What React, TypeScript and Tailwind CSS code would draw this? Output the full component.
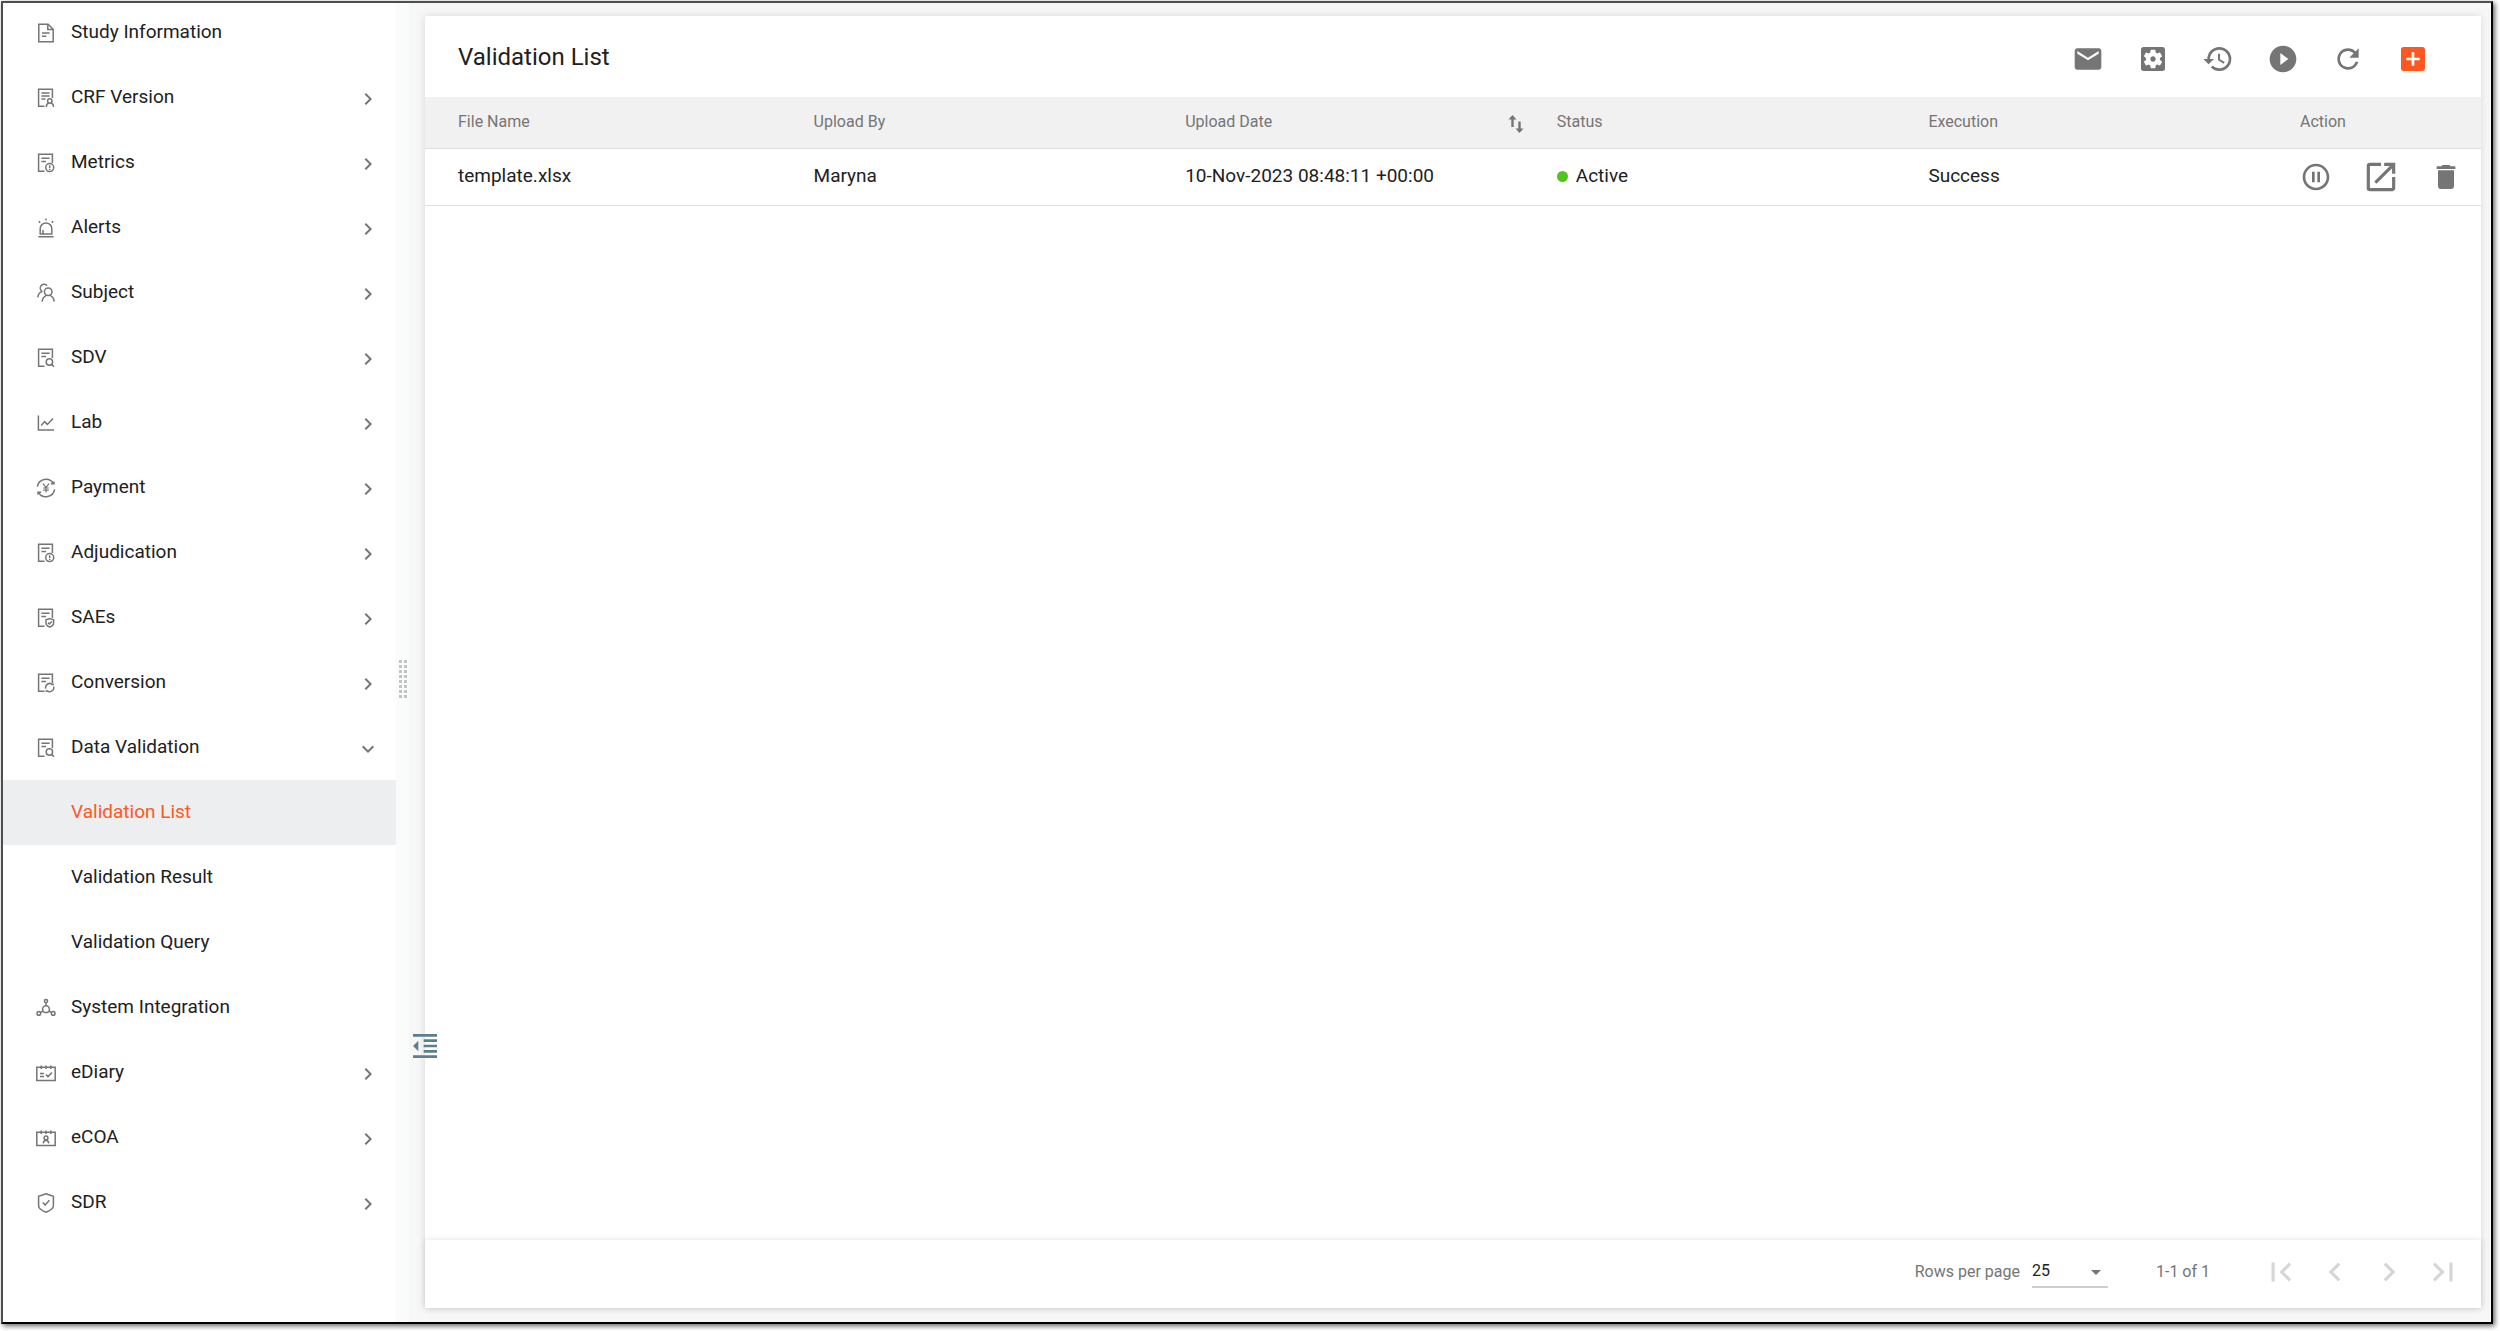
import type { ReactNode } from "react";
import {
  MdAddBox,
  MdArrowDropDown,
  MdChevronLeft,
  MdChevronRight,
  MdDelete,
  MdExpandMore,
  MdFirstPage,
  MdFormatIndentDecrease,
  MdHistory,
  MdLastPage,
  MdMail,
  MdOpenInNew,
  MdPauseCircleOutline,
  MdPlayCircleFilled,
  MdRefresh,
  MdSettingsApplications,
} from "react-icons/md";

function MenuIcon({ children }: { children: ReactNode }) {
  return (
    <svg
      className="h-5 w-5 shrink-0 text-[#757575]"
      viewBox="0 0 20 20"
      fill="none"
      stroke="currentColor"
      strokeWidth="1.5"
      aria-hidden="true"
    >
      {children}
    </svg>
  );
}

// Sheet with the lower right corner left open for a small mark
function SheetIcon({ children }: { children: ReactNode }) {
  return (
    <MenuIcon>
      <path d="M8.5 18.3H2.6V1.2H16.4V10" />
      <path d="M5.4 5.2H13.6M5.4 8.6H10" />
      {children}
    </MenuIcon>
  );
}

const icons = {
  study: (
    <MenuIcon>
      <path d="M2.8 1.2H12.2L17.2 6.2V18.8H2.8Z" />
      <path d="M11.8 1.4V6.6H17M6 10H13.6M6 13.2H10.4" />
    </MenuIcon>
  ),
  crf: (
    <MenuIcon>
      <path d="M8.5 18.3H2.6V1.2H16.4V10" />
      <path d="M5.4 5H13.6M5.4 8H13.6M5.4 11H9.5" />
      <circle cx="13.8" cy="13" r="2.2" />
      <path d="M10.4 19V18A2.8 2.8 0 0 1 12.6 15.3M17.4 19V18A2.8 2.8 0 0 0 15.2 15.3" />
    </MenuIcon>
  ),
  info: (
    <SheetIcon>
      <circle cx="13.7" cy="14.6" r="4" />
      <path d="M13.7 12.3V15.2M13.7 15.9V17" />
    </SheetIcon>
  ),
  search: (
    <SheetIcon>
      <circle cx="13.4" cy="14" r="3.2" />
      <path d="M15.6 16.4L18 18.8" />
    </SheetIcon>
  ),
  shield: (
    <SheetIcon>
      <path d="M13.8 10.6L17.6 11.9V15C17.6 17 15.6 18.4 13.8 19C12 18.4 10 17 10 15V11.9Z" />
      <path d="M12 14.6L13.4 16L15.8 13.4" />
    </SheetIcon>
  ),
  convert: (
    <SheetIcon>
      <path d="M9.8 15.6A4 4 0 0 1 16.6 11.8M17.6 13.6A4 4 0 0 1 10.8 17.4M17.4 10.6L16.8 12.2M10 18.8L10.6 17.2" />
    </SheetIcon>
  ),
  alerts: (
    <MenuIcon>
      <path d="M4.2 16V10.4A5.8 5.4 0 0 1 15.8 10.4V16ZM2.4 18.8H17.6M7 15.6V12" />
      <path d="M10 0.6V2.6M2.8 3.2L4.2 4.6M17.2 3.2L15.8 4.6" />
    </MenuIcon>
  ),
  subject: (
    <MenuIcon>
      <circle cx="12.2" cy="8.8" r="3.8" />
      <path d="M6.2 18.6C6.4 15.4 8.2 13.4 10.4 12.4M18.2 18.6C18 15.4 16.2 13.4 14 12.4" />
      <path d="M11 2.8A3.6 3.6 0 0 0 5 7.4L5.8 8.6C3.4 9.6 2 11.6 1.8 14.4" />
    </MenuIcon>
  ),
  lab: (
    <MenuIcon>
      <path d="M2.4 2.6V17H18M5.2 12.4L8.6 8.6L11.4 11.4L17 5.6" />
    </MenuIcon>
  ),
  payment: (
    <MenuIcon>
      <path d="M1.4 8.6A8.7 8.7 0 0 1 17.4 5.4M18.6 11.4A8.7 8.7 0 0 1 2.6 14.6" />
      <path d="M14.8 5.8H18V3.4M5.2 14.2H2V16.6" />
      <path d="M7 5.6L10 9.6L13 5.6M10 9.6V14.6M7.2 10H12.8M7.2 12.2H12.8" strokeWidth="1.2" />
    </MenuIcon>
  ),
  system: (
    <MenuIcon>
      <circle cx="10" cy="11.2" r="3.4" />
      <circle cx="10" cy="3" r="1.6" />
      <circle cx="2.8" cy="15.4" r="1.8" />
      <circle cx="17.2" cy="15.4" r="1.8" />
      <path d="M10 4.8V7.6M4.4 14.6L7 13M15.6 14.6L13 13" />
    </MenuIcon>
  ),
  diary: (
    <MenuIcon>
      <path d="M0.8 4.2H19.2V17.4H0.8ZM5.2 2.4V6M10 2.4V6M14.8 2.4V6" />
      <path d="M4 10.6H8M4 13.6H8M10 11.4L12 13.6L16 9.4" />
    </MenuIcon>
  ),
  coa: (
    <MenuIcon>
      <path d="M0.8 4.2H19.2V17.4H0.8ZM5.2 2.4V6M10 2.4V6M14.8 2.4V6" />
      <circle cx="10" cy="10" r="1.9" />
      <path d="M7.2 15.4C7.4 13.4 8.2 12.4 10 12.2C11.8 12.4 12.6 13.4 12.8 15.4" />
    </MenuIcon>
  ),
  sdr: (
    <MenuIcon>
      <path d="M10 0.8L17.4 3.2V12.4C17.4 15.4 13 18 10 19.2C7 18 2.6 15.4 2.6 12.4V3.2Z" />
      <path d="M6.8 9.6L9.2 12L13.4 7.2" />
    </MenuIcon>
  ),
};

type MenuItem = {
  label: string;
  icon: ReactNode;
  arrow?: boolean;
  children?: string[];
};

const menu: MenuItem[] = [
  { label: "Study Information", icon: icons.study },
  { label: "CRF Version", icon: icons.crf, arrow: true },
  { label: "Metrics", icon: icons.info, arrow: true },
  { label: "Alerts", icon: icons.alerts, arrow: true },
  { label: "Subject", icon: icons.subject, arrow: true },
  { label: "SDV", icon: icons.search, arrow: true },
  { label: "Lab", icon: icons.lab, arrow: true },
  { label: "Payment", icon: icons.payment, arrow: true },
  { label: "Adjudication", icon: icons.info, arrow: true },
  { label: "SAEs", icon: icons.shield, arrow: true },
  { label: "Conversion", icon: icons.convert, arrow: true },
  {
    label: "Data Validation",
    icon: icons.search,
    arrow: true,
    children: ["Validation List", "Validation Result", "Validation Query"],
  },
  { label: "System Integration", icon: icons.system },
  { label: "eDiary", icon: icons.diary, arrow: true },
  { label: "eCOA", icon: icons.coa, arrow: true },
  { label: "SDR", icon: icons.sdr, arrow: true },
];

function Sidebar() {
  const active = "Validation List";

  return (
    <nav className="-mt-[3px] w-[393px] shrink-0 bg-white text-[19px] leading-6">
      <ul>
        {menu.map((item) => (
          <li key={item.label}>
            <button type="button" className="flex h-[65px] w-full items-center gap-[15px] pl-[33px] pr-4 text-left">
              {item.icon}
              <span className="flex-1 pb-[2px]">{item.label}</span>
              {item.arrow &&
                (item.children ? (
                  <MdExpandMore className="mt-[2px] h-6 w-6 text-[#757575]" />
                ) : (
                  <MdChevronRight className="mt-[2px] h-6 w-6 text-[#757575]" />
                ))}
            </button>
            {item.children && (
              <ul>
                {item.children.map((child) => (
                  <li key={child}>
                    <a
                      href="#"
                      className={
                        child === active
                          ? "flex h-[65px] items-center bg-[#edeef0] pb-[2px] pl-[68px] text-[#ff5722]"
                          : "flex h-[65px] items-center pb-[2px] pl-[68px]"
                      }
                    >
                      {child}
                    </a>
                  </li>
                ))}
              </ul>
            )}
          </li>
        ))}
      </ul>
    </nav>
  );
}

const tools = [
  { label: "Mail", icon: <MdMail className="h-8 w-8" /> },
  { label: "Settings", icon: <MdSettingsApplications className="h-8 w-8" /> },
  { label: "History", icon: <MdHistory className="h-8 w-8" /> },
  { label: "Run", icon: <MdPlayCircleFilled className="h-8 w-8" /> },
  { label: "Refresh", icon: <MdRefresh className="h-8 w-8" /> },
  { label: "Add", icon: <MdAddBox className="h-8 w-8 text-[#ff5722]" /> },
];

const rowActions = [
  { label: "Pause", icon: <MdPauseCircleOutline className="h-8 w-8" /> },
  { label: "Open", icon: <MdOpenInNew className="h-[38px] w-[38px]" /> },
  { label: "Delete", icon: <MdDelete className="h-8 w-8" /> },
];

const pager = [
  { label: "First page", icon: <MdFirstPage className="h-[38px] w-[38px]" /> },
  { label: "Previous page", icon: <MdChevronLeft className="h-[38px] w-[38px]" /> },
  { label: "Next page", icon: <MdChevronRight className="h-[38px] w-[38px]" /> },
  { label: "Last page", icon: <MdLastPage className="h-[38px] w-[38px]" /> },
];

const rows = [
  {
    file: "template.xlsx",
    user: "Maryna",
    date: "10-Nov-2023 08:48:11 +00:00",
    status: "Active",
    execution: "Success",
  },
];

function SortIcon() {
  return (
    <svg className="mt-1 h-5 w-4 text-[#757575]" viewBox="0 0 16 20" fill="currentColor" aria-hidden="true">
      <path d="M4.5 1L8.5 5.5H5.7V13H3.3V5.5H0.5ZM11.5 19L7.5 14.5H10.3V7.5H12.7V14.5H15.5Z" />
    </svg>
  );
}

function ValidationTable() {
  return (
    <table className="w-full table-fixed text-left">
      <thead className="bg-[#f1f1f1] text-base text-[#757575]">
        <tr className="h-[51px] border-b border-[#e0e0e0]">
          <th className="pl-[33px] font-normal">File Name</th>
          <th className="pl-[17px] font-normal">Upload By</th>
          <th className="pl-[17px] pr-4 font-normal">
            <button type="button" className="flex w-full items-center justify-between">
              Upload Date
              <SortIcon />
            </button>
          </th>
          <th className="pl-[17px] font-normal">Status</th>
          <th className="pl-[17px] font-normal">Execution</th>
          <th className="w-[198px] pl-[17px] font-normal">Action</th>
        </tr>
      </thead>
      <tbody className="text-[19px]">
        {rows.map((row) => (
          <tr key={row.file} className="h-[57px] border-b border-[#e0e0e0]">
            <td className="pl-[33px]">{row.file}</td>
            <td className="pl-[17px]">{row.user}</td>
            <td className="pl-[17px]">{row.date}</td>
            <td className="pl-[17px]">
              <span className="flex items-center gap-2">
                <span className="h-[11px] w-[11px] rounded-full bg-[#52c41a]" />
                {row.status}
              </span>
            </td>
            <td className="pl-[17px]">{row.execution}</td>
            <td>
              <div className="flex text-[#757575]">
                {rowActions.map((action) => (
                  <button
                    key={action.label}
                    type="button"
                    aria-label={action.label}
                    className="flex w-[65px] items-center justify-center"
                  >
                    {action.icon}
                  </button>
                ))}
              </div>
            </td>
          </tr>
        ))}
      </tbody>
    </table>
  );
}

function Pagination() {
  return (
    <footer className="flex h-[68px] items-center justify-end bg-white pb-1 pr-[11px] text-base text-[#757575] shadow-[0_0_6px_rgba(0,0,0,0.12)]">
      <label htmlFor="page-size">Rows per page</label>
      <div className="relative ml-3 mr-12 text-[#212121]">
        <select id="page-size" defaultValue="25" className="h-8 w-[76px] appearance-none border-b-2 border-[#cfcfcf]">
          <option>25</option>
          <option>50</option>
          <option>100</option>
        </select>
        <MdArrowDropDown className="pointer-events-none absolute right-0 top-1 h-6 w-6 text-[#757575]" />
      </div>
      <span className="mr-11">1-1 of 1</span>
      <div className="flex text-[#d6d6d6]">
        {pager.map((page) => (
          <button
            key={page.label}
            type="button"
            disabled
            aria-label={page.label}
            className="flex w-[54px] items-center justify-center"
          >
            {page.icon}
          </button>
        ))}
      </div>
    </footer>
  );
}

export default function App() {
  return (
    <div className="h-screen bg-white pb-[7px] pl-px pr-[7px] pt-px font-['Roboto',sans-serif] text-[#212121]">
      <div className="flex h-full overflow-clip border-2 border-b-black border-l-[#4b4f50] border-r-black border-t-[#4b4f50] bg-[#f7f7f7] shadow-[2px_2px_5px_rgba(0,0,0,0.6)]">
        <Sidebar />

        {/* Resize strip */}
        <div className="flex w-[13px] shrink-0 items-center justify-center bg-[#fafcfc] pt-8">
          <div className="grid grid-cols-2 gap-[2px]">
            {Array.from({ length: 16 }, (_, i) => (
              <span key={i} className="h-[3px] w-[3px] bg-[#c2c4c4]" />
            ))}
          </div>
        </div>

        <main className="relative min-w-0 flex-1 pb-[14px] pl-4 pr-[10px] pt-[13px]">
          <section className="flex h-full flex-col bg-white shadow-[0_0_8px_rgba(0,0,0,0.12)]">
            <header className="flex h-[81px] items-center justify-between pl-[33px] pr-9">
              <h1 className="text-[24px]">Validation List</h1>
              <div className="flex pt-1 text-[#757575]">
                {tools.map((tool) => (
                  <button
                    key={tool.label}
                    type="button"
                    aria-label={tool.label}
                    className="flex w-[65px] items-center justify-center"
                  >
                    {tool.icon}
                  </button>
                ))}
              </div>
            </header>
            <div className="flex-1">
              <ValidationTable />
            </div>
            <Pagination />
          </section>

          <button type="button" aria-label="Collapse menu" className="absolute bottom-[260px] left-0 text-[#5b7f8f]">
            <MdFormatIndentDecrease className="h-8 w-8" />
          </button>
        </main>
      </div>
    </div>
  );
}
